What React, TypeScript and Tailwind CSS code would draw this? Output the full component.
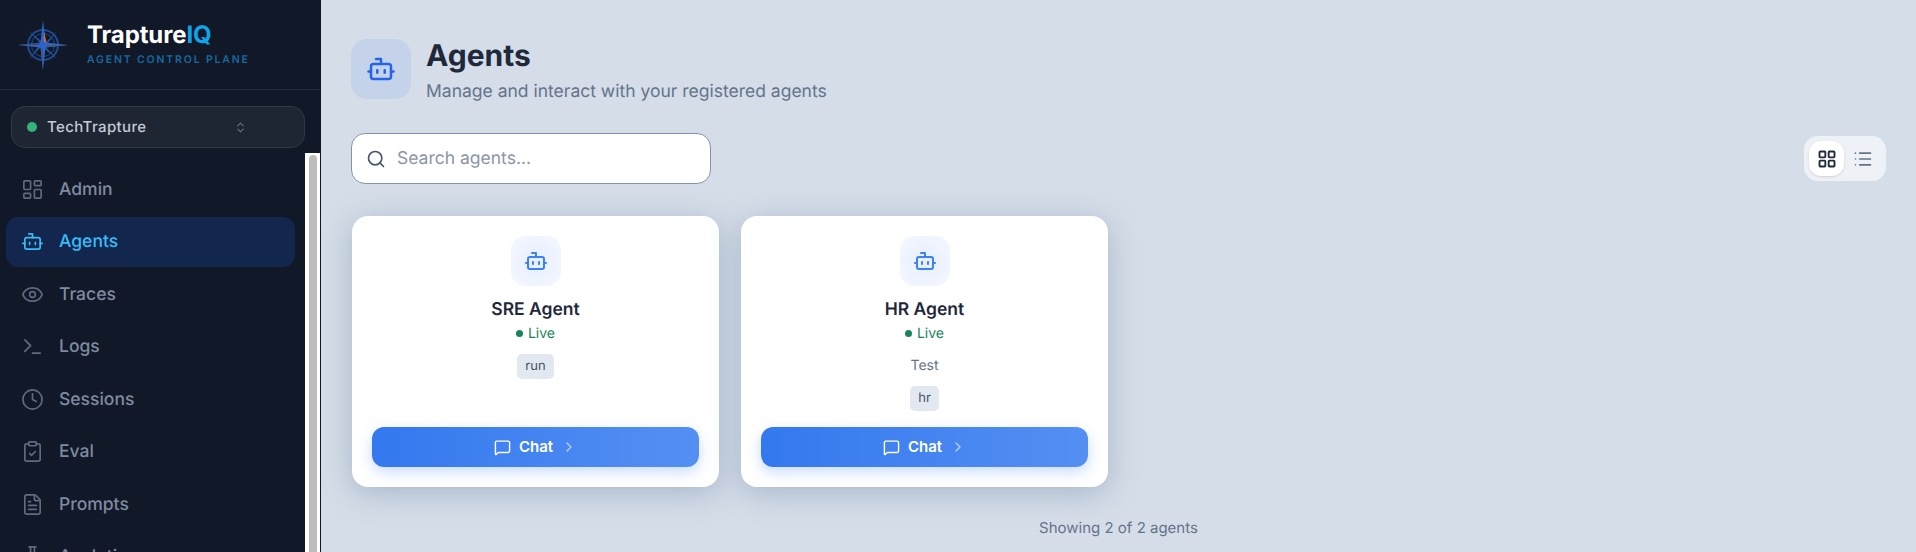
import { Bot, ChevronRight, ChevronsUpDown, ClipboardCheck, Clock, Eye, FileText, FlaskConical, LayoutDashboard, LayoutGrid, List, MessageSquare, Search, Terminal } from "lucide-react";

const nav = [
  { label: "Admin", Icon: LayoutDashboard },
  { label: "Agents", Icon: Bot, active: true },
  { label: "Traces", Icon: Eye },
  { label: "Logs", Icon: Terminal },
  { label: "Sessions", Icon: Clock },
  { label: "Eval", Icon: ClipboardCheck },
  { label: "Prompts", Icon: FileText },
  { label: "Analytics", Icon: FlaskConical },
];

function Logo() {
  const long = "42,16 44.5,38.5 67,41 44.5,43.5 42,66 39.5,43.5 17,41 39.5,38.5";
  return (
    <svg width="84" height="82" viewBox="0 0 84 82" className="shrink-0">
      <circle cx="42" cy="41" r="15" fill="none" stroke="#1f4a90" strokeWidth="2" />
      <circle cx="42" cy="41" r="11.5" fill="none" stroke="#1f4a90" strokeWidth="1" />
      <polygon points="28,27 43.5,39.5 56,27 44.5,42.5 56,55 40.5,42.5 28,55 39.5,39.5" fill="#2352a5" />
      <polygon points={long} fill="#2c68c8" />
      <polygon points="42,41 67,41 44.5,43.5" fill="#4a5876" />
      <polygon points="42,41 17,41 39.5,38.5" fill="#3b4c70" />
      <polygon points="42,41 42,66 39.5,43.5" fill="#46587c" />
      <polygon points="43,27 45.5,38.5 43,38.5" fill="#d9693a" />
      <circle cx="42" cy="41" r="3.5" fill="#2a62d0" />
    </svg>
  );
}

function AgentCard({ name, desc, tag }: { name: string; desc?: string; tag: string }) {
  return (
    <div className="flex h-[271px] flex-col items-center rounded-2xl bg-white px-5 pt-5 pb-5 shadow-[0_6px_30px_rgba(100,125,160,0.4)]">
      <div className="flex h-[50px] w-[50px] items-center justify-center rounded-[14px] bg-[radial-gradient(circle,#e6eefd_0%,#f4f7ff_90%)]">
        <Bot size={24} strokeWidth={2} className="text-[#3b82f6]" />
      </div>
      <div className="mt-[11px] text-[17.5px] leading-[26px] font-semibold text-[#1e293b]">{name}</div>
      <div className="flex h-[20px] items-center gap-[5px] text-[14px] text-[#15855a]">
        <span className="h-[7px] w-[7px] rounded-full bg-[#15855a]" />
        Live
      </div>
      {desc ? <div className="mt-[13px] text-[14px] leading-[20px] text-[#64748b]">{desc}</div> : null}
      <div className={`flex h-[25px] items-center rounded-[5px] bg-[#e2e8f0] px-[8px] text-[13px] text-[#475569] ${desc ? "mt-[10px]" : "mt-[11px]"}`}>{tag}</div>
      <div className="flex-1" />
      <button className="flex h-[40px] w-full items-center justify-center rounded-xl bg-gradient-to-r from-[#3478ef] to-[#5490f2] text-[15px] font-semibold text-white shadow-[0_5px_14px_rgba(59,130,246,0.28)]">
        <MessageSquare size={17} strokeWidth={2} />
        <span className="ml-[8px]">Chat</span>
        <ChevronRight size={16} strokeWidth={2} className="ml-[8px] text-white/60" />
      </button>
    </div>
  );
}

export default function App() {
  return (
    <div className="flex h-[552px] w-[1916px] overflow-hidden bg-[#d5dde8] font-['Inter',sans-serif] [text-rendering:geometricPrecision]">
      <aside className="flex h-full w-[321px] shrink-0 flex-col border-r border-[#111827] bg-[#111827]">
        <div className="flex h-[90px] shrink-0 items-center border-b border-[#232a38]">
          <div className="ml-[1px] flex items-center">
            <Logo />
            <div className="ml-[2px] -mt-[2px]">
              <div className="text-[24px] leading-[30px] font-bold tracking-[-0.005em] text-white">
                Trapture<span className="text-[#0ea5e9]">IQ</span>
              </div>
              <div className="mt-[3px] text-[10.5px] leading-[14px] font-semibold tracking-[0.175em] text-[#17699f]">AGENT CONTROL PLANE</div>
            </div>
          </div>
        </div>
        <div className="shrink-0 px-[11px] pt-[16px]">
          <div className="flex h-[42px] w-[294px] items-center rounded-[14px] border border-[#303745] bg-[#1e2533] pl-[15px]">
            <span className="h-[10px] w-[10px] rounded-full bg-[#34b27e]" />
            <span className="ml-[10px] text-[15px] font-medium tracking-[0.025em] text-[#c3cbd8]">TechTrapture</span>
            <ChevronsUpDown size={13} strokeWidth={2} className="ml-[87px] text-[#64748b]" />
          </div>
        </div>
        <div className="mt-[5px] flex min-h-0 flex-1">
          <nav className="flex-1 overflow-hidden pt-[11px] pl-[6px]">
            {nav.map(({ label, Icon, active }) => (
              <div
                key={label}
                className={`mb-[2.5px] flex h-[50px] w-[289px] items-center rounded-xl pl-[15px] text-[17.5px] font-medium ${active ? "bg-[#12264e] text-[#38bdf8]" : "text-[#7f8ba0]"}`}
              >
                <Icon size={23} strokeWidth={1.75} className={active ? "text-[#38bdf8]" : "text-[#5f6b80]"} />
                <span className="ml-[15px] pt-[2px]">{label}</span>
              </div>
            ))}
          </nav>
          <div className="h-full w-[15px] shrink-0 bg-white px-[4px] pt-[2px] pr-[3px]">
            <div className="h-[600px] rounded-t-[4px] bg-[#bdbdbd]" />
          </div>
        </div>
      </aside>
      <main className="flex min-w-0 flex-1 flex-col px-[30px] pt-[39px]">
        <div className="flex h-[60px] items-start">
          <div className="flex h-[60px] w-[60px] items-center justify-center rounded-2xl bg-[#c5d3ea]">
            <Bot size={30} strokeWidth={2} className="text-[#2563eb]" />
          </div>
          <div className="ml-[15px] -mt-[1px]">
            <h1 className="text-[30px] leading-[36px] font-bold text-[#1e293b]">Agents</h1>
            <p className="mt-[5px] text-[17.5px] leading-[26px] text-[#64748b]">Manage and interact with your registered agents</p>
          </div>
        </div>
        <div className="mt-[34px] flex items-center justify-between">
          <div className="flex h-[51px] w-[360px] items-center rounded-[14px] border border-[#8493ad] bg-white pl-[14px]">
            <Search size={20} strokeWidth={2} className="text-[#475569]" />
            <span className="ml-[11px] pt-[2px] text-[17.5px] text-[#8b95a7]">Search agents...</span>
          </div>
          <div className="flex h-[45px] w-[82px] items-center rounded-[14px] bg-[#eef2f7] pl-[5px]">
            <div className="flex h-[35px] w-[35px] items-center justify-center rounded-xl bg-white shadow-sm">
              <LayoutGrid size={20} strokeWidth={2.25} className="text-[#1e293b]" />
            </div>
            <List size={20} strokeWidth={2} className="ml-[9px] text-[#64748b]" />
          </div>
        </div>
        <div className="mt-[32px] ml-[1px] grid grid-cols-[367px_367px] gap-[22px]">
          <AgentCard name="SRE Agent" tag="run" />
          <AgentCard name="HR Agent" desc="Test" tag="hr" />
        </div>
        <div className="mt-[31px] text-center text-[15px] leading-[20px] text-[#64748b]">Showing 2 of 2 agents</div>
      </main>
    </div>
  );
}
